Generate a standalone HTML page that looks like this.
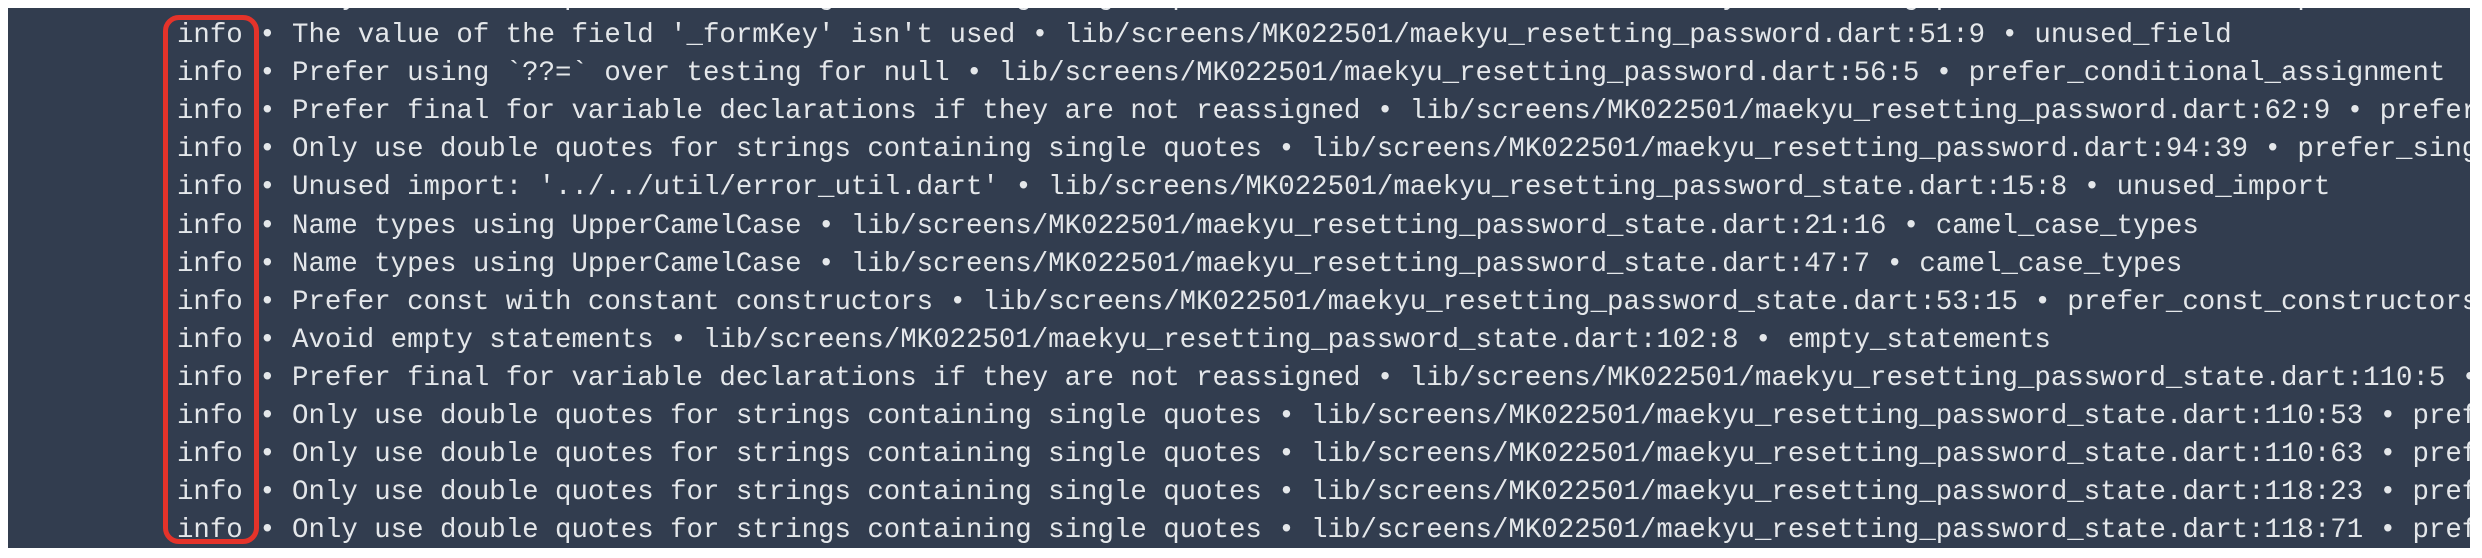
<!DOCTYPE html>
<html><head><meta charset="utf-8"><style>
html,body{margin:0;padding:0;background:#fff;width:2482px;height:558px;overflow:hidden}
.panel{position:absolute;left:8px;top:8px;width:2462px;height:540px;background:#323d4f;overflow:hidden}
.lines{position:absolute;left:169px;top:-29px;font-family:"Liberation Mono",monospace;font-size:27.4px;line-height:38.1px;color:#e4e7ea;white-space:pre}
.box{position:absolute;left:163px;top:15px;width:96px;height:529px;border:5px solid #e5332a;border-radius:16px;box-sizing:border-box}
</style></head><body>
<div class="panel"><div class="lines">info • Only use double quotes for strings containing single quotes • lib/screens/MK022501/maekyu_resetting_password.dart:40:22 • prefer
info • The value of the field '_formKey' isn't used • lib/screens/MK022501/maekyu_resetting_password.dart:51:9 • unused_field
info • Prefer using `??=` over testing for null • lib/screens/MK022501/maekyu_resetting_password.dart:56:5 • prefer_conditional_assignment
info • Prefer final for variable declarations if they are not reassigned • lib/screens/MK022501/maekyu_resetting_password.dart:62:9 • prefer_final
info • Only use double quotes for strings containing single quotes • lib/screens/MK022501/maekyu_resetting_password.dart:94:39 • prefer_single
info • Unused import: '../../util/error_util.dart' • lib/screens/MK022501/maekyu_resetting_password_state.dart:15:8 • unused_import
info • Name types using UpperCamelCase • lib/screens/MK022501/maekyu_resetting_password_state.dart:21:16 • camel_case_types
info • Name types using UpperCamelCase • lib/screens/MK022501/maekyu_resetting_password_state.dart:47:7 • camel_case_types
info • Prefer const with constant constructors • lib/screens/MK022501/maekyu_resetting_password_state.dart:53:15 • prefer_const_constructors
info • Avoid empty statements • lib/screens/MK022501/maekyu_resetting_password_state.dart:102:8 • empty_statements
info • Prefer final for variable declarations if they are not reassigned • lib/screens/MK022501/maekyu_resetting_password_state.dart:110:5 • prefer
info • Only use double quotes for strings containing single quotes • lib/screens/MK022501/maekyu_resetting_password_state.dart:110:53 • prefer
info • Only use double quotes for strings containing single quotes • lib/screens/MK022501/maekyu_resetting_password_state.dart:110:63 • prefer
info • Only use double quotes for strings containing single quotes • lib/screens/MK022501/maekyu_resetting_password_state.dart:118:23 • prefer
info • Only use double quotes for strings containing single quotes • lib/screens/MK022501/maekyu_resetting_password_state.dart:118:71 • prefer</div></div>
<div class="box"></div>
</body></html>
